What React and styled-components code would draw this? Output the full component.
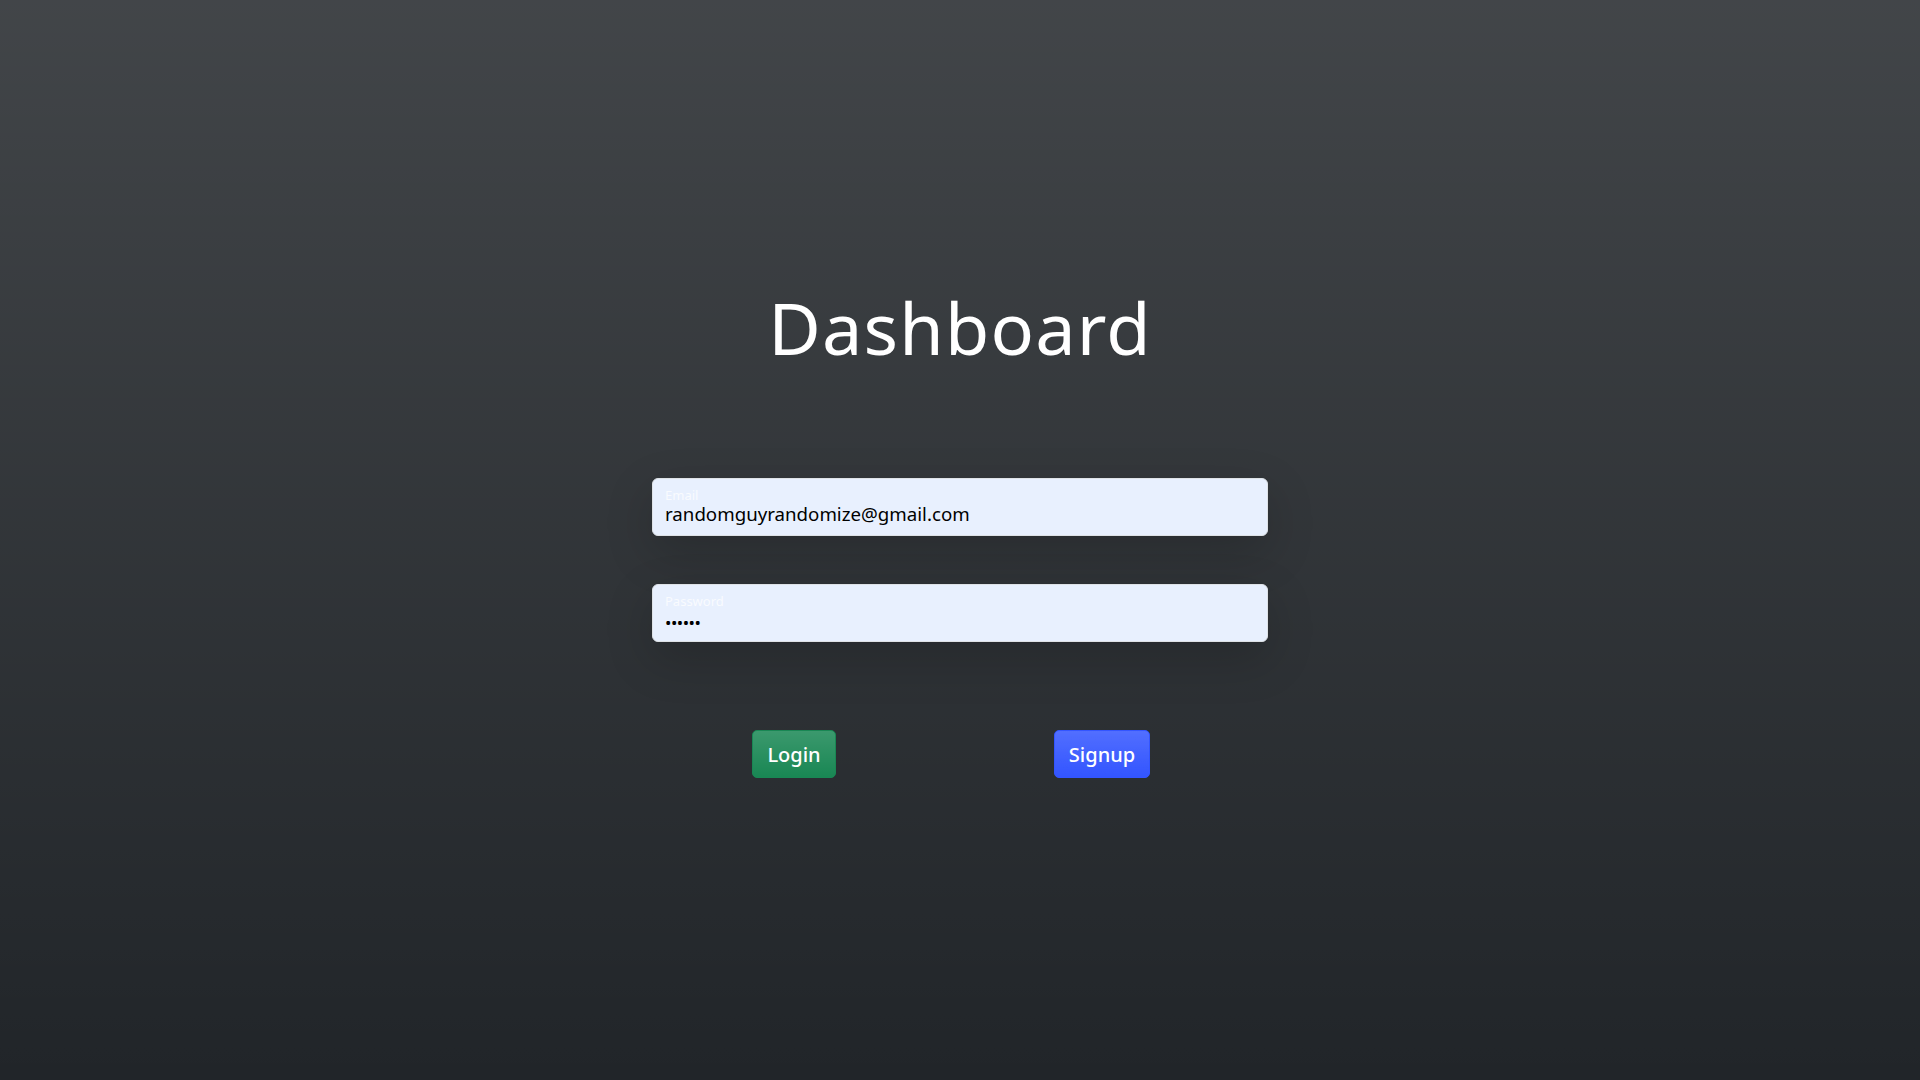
import React from "react";
import styled, { createGlobalStyle } from "styled-components";

const GlobalStyle = createGlobalStyle`
  html, body {
    margin: 0;
    padding: 0;
    height: 100%;
  }
  body {
    font-family: "Noto Sans", "Open Sans", sans-serif;
    background-color: #212529;
  }
  #root {
    min-height: 100vh;
  }
`;

export default function App() {
  return (
    <>
      <GlobalStyle />
      <Page>
        <Title>Dashboard</Title>
        <Form onSubmit={(e) => e.preventDefault()}>
          <Floating>
            <Input type="email" id="email" defaultValue="randomguyrandomize@gmail.com" />
            <Label htmlFor="email">Email</Label>
          </Floating>
          <Floating>
            <Input type="password" id="password" defaultValue="123456" />
            <Label htmlFor="password">Password</Label>
          </Floating>
          <ButtonRow>
            <Col>
              <Button $variant="success">Login</Button>
            </Col>
            <Col>
              <Button $variant="primary">Signup</Button>
            </Col>
          </ButtonRow>
        </Form>
      </Page>
    </>
  );
}

const Page = styled.main`
  min-height: 100vh;
  box-sizing: border-box;
  background-color: #212529;
  background-image: linear-gradient(180deg, rgba(255, 255, 255, 0.15), rgba(255, 255, 255, 0));
  display: flex;
  flex-direction: column;
  align-items: center;
  padding-top: 277px;
`;

const Title = styled.h1`
  margin: 0;
  color: #fff;
  font-size: 72px;
  font-weight: 400;
  line-height: 100px;
  letter-spacing: 1.2px;
`;

const Form = styled.form`
  width: 616px;
  margin-top: 101px;
  display: flex;
  flex-direction: column;
  gap: 48px;
`;

const Floating = styled.div`
  position: relative;
`;

const Input = styled.input`
  width: 100%;
  height: 58px;
  box-sizing: border-box;
  border: 1px solid #dee2e6;
  border-radius: 6px;
  background: #e8f0fe;
  padding: 21px 12px 9px;
  font-family: "Noto Sans", sans-serif;
  font-size: 18.7px;
  color: #000;
  outline: none;
  box-shadow: 0 1rem 3rem rgba(0, 0, 0, 0.175);
  &[type="password"] {
    font-size: 17px;
    letter-spacing: -0.5px;
    padding-top: 24px;
    padding-bottom: 6px;
  }
`;

const Label = styled.label`
  position: absolute;
  top: 8px;
  left: 13px;
  font-size: 13px;
  color: rgba(255, 255, 255, 0.75);
  pointer-events: none;
`;

const ButtonRow = styled.div`
  display: grid;
  grid-template-columns: 1fr 1fr;
  width: 616px;
  margin-left: -12px;
  margin-top: 40px;
`;

const Col = styled.div`
  display: flex;
  justify-content: center;
`;

const colors = {
  success: { bg: "#198754", border: "#198754" },
  primary: { bg: "#3355ff", border: "#3355ff" },
};

const Button = styled.button`
  height: 48px;
  padding: 0 14px;
  border-radius: 5px;
  border: 1px solid ${(p) => colors[p.$variant].border};
  background-color: ${(p) => colors[p.$variant].bg};
  background-image: linear-gradient(180deg, rgba(255, 255, 255, 0.15), rgba(255, 255, 255, 0));
  color: #fff;
  font-family: "Noto Sans", sans-serif;
  font-size: 20px;
  font-weight: 500;
  cursor: pointer;
`;
